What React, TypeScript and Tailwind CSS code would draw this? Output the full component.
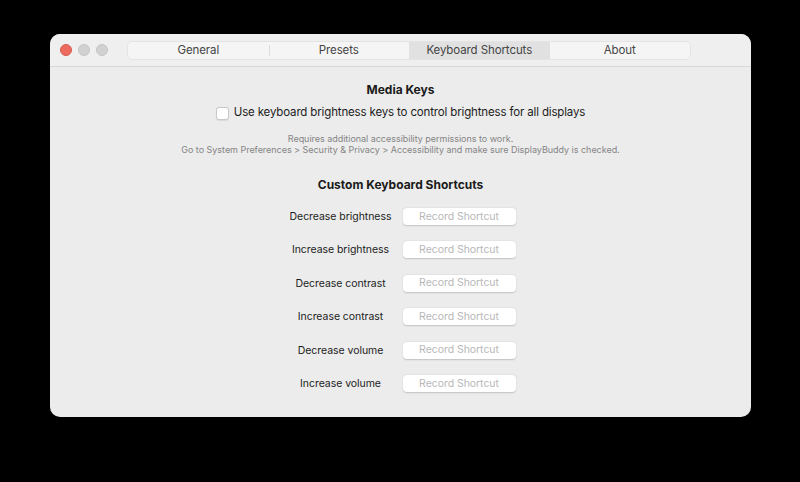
import React from 'react';

const tabs = ['General', 'Presets', 'Keyboard Shortcuts', 'About'];
const shortcuts = [
  'Decrease brightness',
  'Increase brightness',
  'Decrease contrast',
  'Increase contrast',
  'Decrease volume',
  'Increase volume',
];

const TrafficLights: React.FC = () => (
  <div className="flex items-center gap-[6px] pl-[10px]">
    <span className="w-[12px] h-[12px] rounded-full bg-[#ec6a5e] border border-[#d95c51]" />
    <span className="w-[12px] h-[12px] rounded-full bg-[#d1d1d1] border border-[#c4c4c4]" />
    <span className="w-[12px] h-[12px] rounded-full bg-[#d1d1d1] border border-[#c4c4c4]" />
  </div>
);

export default function App() {
  const active = 'Keyboard Shortcuts';

  return (
    <div
      className="w-[800px] h-[482px] bg-black pt-[34px] pl-[50px]"
      style={{ fontFamily: 'Inter, "Noto Sans", sans-serif' }}
    >
      <div className="w-[701px] h-[383px] rounded-[10px] bg-[#ececec] overflow-hidden flex flex-col">
        {/* Title bar with tabs */}
        <div className="h-[33px] shrink-0 bg-[#efefef] border-b border-[#d8d8d8] flex items-center">
          <TrafficLights />
          <div className="ml-[19px] w-[564px] h-[19px] flex rounded-[5px] bg-[#f5f5f5] border border-[#e4e4e4] overflow-hidden">
            {tabs.map((tab, i) => (
              <div
                key={tab}
                className={`flex-1 flex items-center justify-center pt-[1px] relative text-[11.5px] tracking-[-0.1px] text-[#444444] ${
                  tab === active ? 'bg-[#e1e1e1]' : ''
                }`}
              >
                {i > 0 && tabs[i - 1] !== active && tab !== active && (
                  <span className="absolute left-0 top-[3px] bottom-[3px] w-px bg-[#dcdcdc]" />
                )}
                {tab}
              </div>
            ))}
          </div>
        </div>

        {/* Content */}
        <div className="flex flex-col items-center">
          <h2 className="mt-[15px] h-[16px] leading-[16px] text-[12px] font-bold text-[#1a1a1a]">Media Keys</h2>

          <label className="mt-[7px] h-[16px] flex items-center gap-[5px] text-[11.5px] tracking-[-0.15px] text-[#1c1c1c]">
            <span className="w-[13px] h-[13px] rounded-[3px] bg-white border border-[#c9c9c9] shadow-[0_0.5px_1px_rgba(0,0,0,0.08)]" />
            Use keyboard brightness keys to control brightness for all displays
          </label>

          <div className="mt-[12px] text-center text-[9px] tracking-[-0.03px] leading-[11px] text-[#858585]">
            <p>Requires additional accessibility permissions to work.</p>
            <p>Go to System Preferences &gt; Security &amp; Privacy &gt; Accessibility and make sure DisplayBuddy is checked.</p>
          </div>

          <h2 className="mt-[22px] h-[16px] leading-[16px] text-[12px] font-bold text-[#1a1a1a]">Custom Keyboard Shortcuts</h2>

          <div className="mt-[15px] flex flex-col gap-[16.4px] ml-[-5px]">
            {shortcuts.map((label) => (
              <div key={label} className="h-[17px] flex items-center gap-[2px]">
                <span className="w-[120px] text-center text-[10.5px] leading-[17px] tracking-[-0.05px] text-[#1c1c1c]">{label}</span>
                <button className="w-[113px] h-[17px] rounded-[4px] bg-white text-[10.5px] tracking-[-0.05px] text-[#b8b8b8] shadow-[0_0.5px_1.5px_rgba(0,0,0,0.18)] flex items-center justify-center">
                  Record Shortcut
                </button>
              </div>
            ))}
          </div>
        </div>
      </div>
    </div>
  );
}
